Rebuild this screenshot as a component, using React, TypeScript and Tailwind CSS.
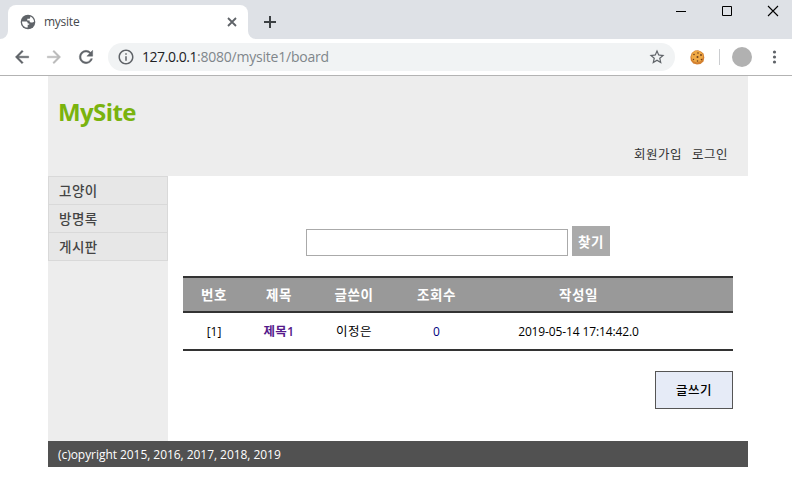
import React from "react";

const icon = "block shrink-0 fill-[#5f6368]";
const bold = icon + " stroke-[#5f6368] [stroke-width:0.5]";

function TabStrip() {
  return (
    <div className="flex h-[39px] bg-[#dee1e6]">
      <div className="flex w-2 shrink-0 items-end bg-[#dee1e6]">
        <svg className="block" width="8" height="8" viewBox="0 0 8 8">
          <path d="M8 0v8H0a8 8 0 0 0 8-8z" fill="#fff" />
        </svg>
      </div>
      <div className="mt-[5px] flex h-[34px] w-60 shrink-0 items-center rounded-t-lg bg-white pl-[12px] pr-[9px]">
        <svg className="block shrink-0" width="16" height="16" viewBox="0 0 16 16">
          <circle cx="8" cy="8" r="7.300" fill="#5f6368" />
          <path d="M2 7.400h4.200c.9 0 1.500.7 1.500 1.500v.6h1.500v1.300H7.700v2.700C4.400 13.600 2 11 2 7.400z" fill="#fff" />
          <path d="M10.200 2.400c2.200.9 3.700 2.800 3.900 5.200-.5.600-1.200.9-2 .9h-1.300c-.7 0-1.200-.5-1.200-1.200v-.9H7.300V4.700h1.600c.8 0 1.300-.6 1.300-1.300z" fill="#fff" />
        </svg>
        <span className="ml-[8px] grow text-[12px] leading-4 tracking-[-0.25px] text-[#45494d]">mysite</span>
        <svg className="block" width="14" height="14" viewBox="0 0 14 14">
          <path d="M3 3l8 8M11 3l-8 8" stroke="#5f6368" strokeWidth="1.800" />
        </svg>
      </div>
      <div className="flex w-2 shrink-0 items-end">
        <svg className="block" width="8" height="8" viewBox="0 0 8 8">
          <path d="M0 0v8h8a8 8 0 0 1-8-8z" fill="#fff" />
        </svg>
      </div>
      <svg className="ml-[7px] mt-[15px] block shrink-0" width="14" height="14" viewBox="0 0 14 14">
        <path d="M7 1v12M1 7h12" stroke="#3c4043" strokeWidth="2" />
      </svg>
      <div className="ml-auto mr-[13px] mt-[5px] flex gap-[34px]">
        <svg className="block" width="12" height="12" viewBox="0 0 12 12">
          <path d="M1 6.500h10" stroke="#000" />
        </svg>
        <svg className="block" width="12" height="12" viewBox="0 0 12 12">
          <path d="M1.500 1.500h9v9h-9z" fill="none" stroke="#000" />
        </svg>
        <svg className="block" width="12" height="12" viewBox="0 0 12 12">
          <path d="M1 1l10 10M11 1L1 11" stroke="#000" strokeWidth="1.100" />
        </svg>
      </div>
    </div>
  );
}

function Toolbar() {
  return (
    <div className="flex h-[37px] items-center border-b border-[#b3b3b3] bg-white pl-3">
      <svg className={bold} width="20" height="20" viewBox="0 0 24 24">
        <path d="M20 11H7.830l5.590-5.590L12 4l-8 8 8 8 1.410-1.410L7.830 13H20v-2z" />
      </svg>
      <svg className="ml-3 block shrink-0 fill-[#bababa] stroke-[#bababa] [stroke-width:0.5]" width="20" height="20" viewBox="0 0 24 24">
        <path d="M12 4l-1.410 1.410L16.170 11H4v2h12.170l-5.580 5.590L12 20l8-8z" />
      </svg>
      <svg className={bold + " ml-3"} width="20" height="20" viewBox="0 0 24 24">
        <path d="M17.650 6.350A7.958 7.958 0 0 0 12 4a8 8 0 1 0 7.730 10h-2.080A5.990 5.990 0 0 1 12 18a6 6 0 1 1 0-12c1.660 0 3.140.69 4.220 1.780L13 11h7V4l-2.350 2.350z" />
      </svg>
      <div className="ml-3 flex h-7 w-[567px] shrink-0 items-center rounded-full bg-[#f1f3f4] pl-[9px] pr-[9px]">
        <svg className={icon} width="18" height="18" viewBox="0 0 24 24">
          <path d="M11 17h2v-6h-2v6zm1-15C6.480 2 2 6.480 2 12s4.480 10 10 10 10-4.480 10-10S17.520 2 12 2zm0 18c-4.410 0-8-3.590-8-8s3.590-8 8-8 8 3.590 8 8-3.590 8-8 8zM11 9h2V7h-2v2z" />
        </svg>
        <span className="ml-[7px] grow whitespace-nowrap text-[14px] leading-5 tracking-[-0.22px] text-[#80868b]">
          <span className="tracking-[-0.45px] text-[#202124]">127.0.0.1</span>:8080/mysite1/board
        </span>
        <svg className={icon} width="18" height="18" viewBox="0 0 24 24">
          <path d="M22 9.240l-7.190-.62L12 2 9.190 8.630 2 9.240l5.460 4.730L5.820 21 12 17.270 18.180 21l-1.630-7.030L22 9.240zM12 15.400l-3.760 2.270 1-4.280-3.320-2.880 4.380-.38L12 6.100l1.710 4.040 4.380.38-3.320 2.880 1 4.280L12 15.400z" />
        </svg>
      </div>
      <svg className="ml-[15px] block shrink-0" width="15" height="15" viewBox="0 0 15 15">
        <path d="M5 .5l3-.3 3 1.200 2.500 2 .8 4-.8 4-3 2.500-3.500.6-3.800-1-2.400-3L.4 7l1.300-4z" fill="#d38030" />
        <path d="M5 1l4 0 3.500 2.500.5 3.500-2 4-4 1.500-4-1.500L1.300 7l1.200-4z" fill="#efa945" />
        <g fill="#6b3c1c">
          <circle cx="4" cy="4.500" r=".8" />
          <circle cx="8" cy="3" r=".8" />
          <circle cx="11" cy="5" r=".9" />
          <circle cx="7.500" cy="7" r="1" />
          <circle cx="3.500" cy="9.500" r=".7" />
          <circle cx="7.500" cy="11" r=".8" />
          <circle cx="11.500" cy="9.500" r=".8" />
        </g>
      </svg>
      <div className="ml-[14px] h-4 w-px shrink-0 bg-[#cbcdd0]" />
      <div className="ml-3 size-5 shrink-0 rounded-full bg-[#b1b1b1]" />
      <svg className={icon + " ml-[13px]"} width="18" height="18" viewBox="0 0 18 18">
        <circle cx="9.500" cy="4" r="1.600" />
        <circle cx="9.500" cy="9" r="1.600" />
        <circle cx="9.500" cy="14" r="1.600" />
      </svg>
    </div>
  );
}

function Board() {
  const cols = "grid grid-cols-[62px_68px_82px_83px_201px_54px] text-center";
  return (
    <div className="w-[580px] pl-[15px] pr-[15px] pt-[50px]">
      <form className="flex items-end justify-center gap-1">
        <input className="block h-[27px] w-[262px] border border-[#aaa] bg-white px-2 text-[13px] outline-none" aria-label="찾기" />
        <button type="button" className="h-[30px] w-[38px] bg-[#aaa] text-[13.5px] font-bold leading-[32px] tracking-[0.5px] text-white">찾기</button>
      </form>
      <div className="mt-5 border-y-2 border-[#333]">
        <div className={cols + " h-[35px] border-b-2 border-[#333] bg-[#999] text-[13.5px] font-bold leading-[34px] tracking-[0.5px] text-white"}>
          <span>번호</span>
          <span>제목</span>
          <span>글쓴이</span>
          <span>조회수</span>
          <span>작성일</span>
          <span />
        </div>
        <div className={cols + " h-9 text-[12px] leading-[37px] text-black"}>
          <span>[1]</span>
          <a className="text-[12.5px] font-semibold tracking-[0.3px] text-[#551a8b]">제목1</a>
          <span className="text-[12.5px] tracking-[0.5px]">이정은</span>
          <span className="text-[#000080]">0</span>
          <span className="whitespace-nowrap tracking-[-0.12px]">2019-05-14 17:14:42.0</span>
          <span />
        </div>
      </div>
      <div className="mt-5 flex justify-end">
        <a className="h-[38px] w-[78px] border border-[#555] bg-[#e6ebf7] text-center text-[12.5px] font-medium leading-[37px] tracking-[0.5px] text-black">글쓰기</a>
      </div>
    </div>
  );
}

export default function App() {
  return (
    <div className="h-[479px] w-[792px] overflow-hidden bg-white font-['Open_Sans','Noto_Sans_CJK_KR',sans-serif]">
      <TabStrip />
      <Toolbar />
      <div className="ml-12 w-[700px]">
        <header className="flex h-[100px] flex-col justify-between bg-[#ededed] pb-[11px] pl-[10px] pr-5 pt-5">
          <h1 className="text-[24px] font-bold leading-8 tracking-[-0.6px] text-[#7ab30e]">MySite</h1>
          <div className="flex justify-end gap-[10px] text-[12.5px] leading-5 tracking-[0.5px] text-[#333]">
            <a>회원가입</a>
            <a>로그인</a>
          </div>
        </header>
        <div className="flex h-[265px]">
          <nav className="w-[120px] shrink-0 bg-[#ededed]">
            <ul className="border border-b-0 border-[#d9d9d9] bg-[#e7e7e7] text-[13.5px] font-medium tracking-[0.5px] text-[#444]">
              <li className="h-7 border-b border-[#d9d9d9] pl-[10px] leading-[28px]">고양이</li>
              <li className="h-7 border-b border-[#d9d9d9] pl-[10px] leading-[28px]">방명록</li>
              <li className="h-7 border-b border-[#d9d9d9] pl-[10px] leading-[28px]">게시판</li>
            </ul>
          </nav>
          <Board />
        </div>
        <footer className="h-[26px] bg-[#515151] pl-[10px] text-[12px] leading-[27px] tracking-[-0.05px] text-white">
          (c)opyright 2015, 2016, 2017, 2018, 2019
        </footer>
      </div>
    </div>
  );
}
